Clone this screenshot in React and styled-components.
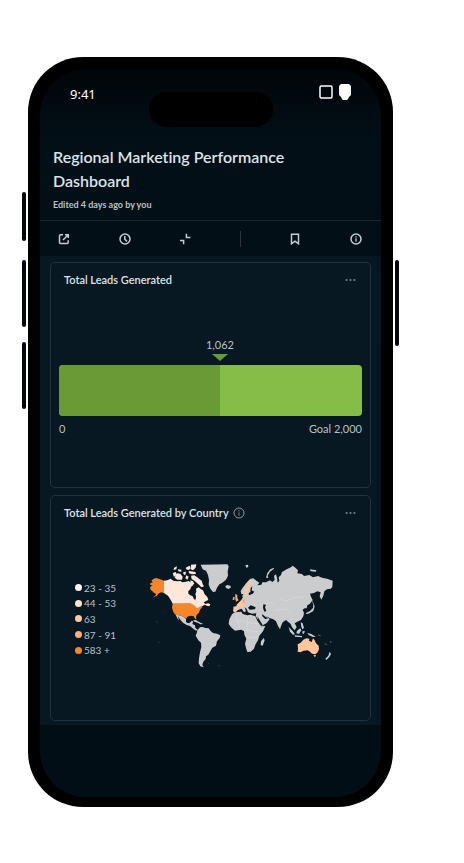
import React from "react";
import styled, { createGlobalStyle } from "styled-components";

const GlobalStyle = createGlobalStyle`
  * { box-sizing: border-box; }
  body { margin: 0; background: #fff; font-family: Lato, "Open Sans", sans-serif; font-variant-ligatures: none; }
  button { font: inherit; color: inherit; background: none; border: 0; padding: 0; cursor: pointer; }
  h1, h2, p, ul { margin: 0; padding: 0; }
  ul { list-style: none; }
  svg { display: block; }
`;

const Page = styled.div`
  padding: 57px 71px 56px 28px;
`;

const Phone = styled.div`
  position: relative;
  padding: 12px 12px 10px;
  background: #000;
  border-radius: 55px;
`;

const SideKey = styled.span`
  position: absolute;
  top: ${(p) => p.$top}px;
  ${(p) => p.$side}: -6px;
  width: 4px;
  height: ${(p) => p.$length}px;
  border-radius: 2px;
  background: #03060c;
`;

const Screen = styled.div`
  display: flex;
  flex-direction: column;
  border-radius: 46px;
  overflow: hidden;
  padding-bottom: 72px;
  background: linear-gradient(#010508, #020f17 70px, #020e16);
  color: #dde3e7;
`;

const StatusBar = styled.div`
  display: grid;
  grid-template-columns: 1fr 124px 1fr;
  align-items: start;
  height: 76px;
  padding: 15px 30px 0;
`;

const Time = styled.time`
  font: 400 13px/20px "Noto Sans", sans-serif;
  color: #fff;
`;

const Island = styled.div`
  height: 35px;
  margin-top: 8px;
  border-radius: 18px;
  background: #000;
`;

const StatusIcons = styled.div`
  display: flex;
  justify-content: flex-end;
  gap: 6px;
`;

const Header = styled.header`
  padding: 0 13px 8px;
`;

const Title = styled.h1`
  padding-right: 60px;
  font-size: 16px;
  line-height: 24px;
  font-weight: 600;
`;

const Edited = styled.p`
  margin-top: 5px;
  font-size: 9px;
  line-height: 14px;
  font-weight: 700;
  color: #b9c3c9;
`;

const Toolbar = styled.nav`
  display: flex;
  align-items: center;
  justify-content: space-between;
  height: 36px;
  padding: 0 19px 0 18px;
  border-top: 1px solid #17252d;
  color: #c3cbd0;
`;

const Separator = styled.span`
  width: 1px;
  height: 16px;
  background: #2a363d;
`;

const IconButton = styled.button`
  display: flex;
`;

const Dashboard = styled.main`
  display: flex;
  flex-direction: column;
  gap: 7px;
  padding: 6px 10px 4px;
  background: #071822;
`;

const Card = styled.section`
  min-height: 226px;
  padding: 0 8px;
  border: 1px solid #20323b;
  border-radius: 5px;
`;

const CardHeader = styled.div`
  display: flex;
  align-items: center;
  gap: 4px;
  height: 34px;
  padding: 0 6px 0 5px;
`;

const CardTitle = styled.h2`
  font-size: 11px;
  line-height: 16px;
  font-weight: 600;
`;

const MoreButton = styled(IconButton)`
  margin-left: auto;
  color: #75828a;
`;

const InfoButton = styled(IconButton)`
  color: #8d989f;
`;

const Goal = styled.div`
  padding-top: 40px;
  font-size: 11px;
  line-height: 16px;
  color: #b7c1c8;
`;

const Marker = styled.div`
  display: flex;
  flex-direction: column;
  align-items: center;
  gap: 1px;
  width: 0;
`;

const Pointer = styled.span`
  border: 8px solid transparent;
  border-top: 7px solid #699a36;
  border-bottom: 0;
`;

const Track = styled.div`
  height: 51px;
  margin: 4px 0 5px;
  border-radius: 4px;
  overflow: hidden;
  background: #85bd48;
`;

const Fill = styled.div`
  height: 100%;
  background: #699a36;
`;

const Scale = styled.div`
  display: flex;
  justify-content: space-between;
`;

const MapBody = styled.div`
  display: flex;
  align-items: center;
  padding: 25px 26px 0 16px;
`;

const Legend = styled.ul`
  display: grid;
  flex: 0 0 65px;
  height: 78px;
`;

const LegendItem = styled.li`
  display: flex;
  align-items: center;
  gap: 2px;
  font-size: 10px;
  line-height: 14px;
  white-space: nowrap;
  color: #b7c1c8;
`;

const Dot = styled.span`
  width: 7px;
  height: 7px;
  border-radius: 50%;
  background: ${(p) => p.$color};
`;

const MapArt = styled.svg`
  flex: 1;
  min-width: 0;
  height: 128px;
`;

const Icon = ({ size = 12, children }) => (
  <svg width={size} height={size} viewBox="0 0 12 12" fill="none" stroke="currentColor" strokeWidth="1.5" aria-hidden="true">
    {children}
  </svg>
);

const InfoShape = ({ weight = 1.5 }) => (
  <>
    <circle cx="6" cy="6" r="5" strokeWidth={weight} />
    <path d="M6 5.3v3.4M6 3.2v1.2" strokeWidth={weight * 0.85} />
  </>
);

const More = () => (
  <MoreButton type="button" aria-label="More options">
    <svg width="11" height="8" viewBox="0 0 11 8" fill="currentColor" aria-hidden="true">
      <circle cx="1.6" cy="4" r="1.1" />
      <circle cx="5.5" cy="4" r="1.1" />
      <circle cx="9.4" cy="4" r="1.1" />
    </svg>
  </MoreButton>
);

const WorldMap = () => (
  <MapArt viewBox="0 0 588 384" role="img" aria-label="World map of leads by country">
    <g fill="#cbcccd">
      <path d="M182 29 262 28 266 34 263 50 264 62 258 74 246 84 238 88 231 98 226 110 219 111 211 101 206 89 207 75 204 60 198 47 188 43Z" />
      <path d="M256 93 262 90 271 92 273 97 266 102 258 99Z" />
      <path d="M106 177 116 181 124 182 132 186 138 193 138 201 144 205 150 203 154 198 160 199 157 207 165 211 166 219 173 224 168 227 158 220 150 213 140 210 130 204 122 196 114 184 117 197 112 190Z" />
      <path d="M159 196 167 195 176 200 183 204 190 207 181 208 173 203 164 200Z" />
      <path d="M172 226 180 217 188 216 196 219 206 220 212 228 219 234 231 236 241 241 239 249 231 259 228 272 217 278 210 290 205 299 198 304 197 312 190 320 187 329 191 337 181 334 176 325 177 310 180 292 184 276 183 263 175 256 167 242 170 235Z" />
    </g>
    <g fill="#ffe8da">
      <path d="M72 77 82 76 92 71 100 77 111 79 121 78 127 82 138 80 146 78 151 82 158 84 160 90 153 96 151 103 145 108 145 116 151 121 158 124 162 133 167 134 168 124 166 117 169 110 168 101 176 97 183 103 189 106 194 118 202 126 205 135 198 138 191 142 196 147 204 145 211 148 208 154 200 152 195 149 186 154 178 160 168 161 160 152 152 146 98 146 94 138 88 128 84 122 72 114Z" />
      <path d="M98 55 107 50 109 59 102 66ZM110 55 121 56 128 65 126 74 112 74 104 68ZM102 38 111 34 109 43 101 45ZM114 43 124 44 124 50 115 49ZM130 51 138 50 136 61 130 57ZM139 37 150 32 151 42 145 45 137 42ZM153 29 169 28 167 38 159 46 152 43ZM146 48 154 49 166 51 168 57 156 58 147 55ZM139 61 146 65 142 74 136 70ZM153 62 163 61 172 67 179 73 185 77 188 87 192 94 184 97 177 89 170 83 163 77 155 72ZM151 76 159 79 163 86 157 90 151 85Z" />
    </g>
    <g fill="#f5862b">
      <path d="M72 77 59 72 48 69 40 72 34 77 39 82 31 84 31 90 38 91 30 97 32 105 37 108 42 114 48 116 47 121 39 127 50 123 57 115 64 112 72 114Z" />
      <path d="M98 146 152 145 160 150 168 155 170 160 180 155 186 151 187 157 180 164 177 173 170 180 168 187 169 194 164 190 161 184 151 182 142 185 138 192 132 186 124 183 114 181 104 177 99 169 96 158Z" />
    </g>
    <g transform="translate(270 0)">
      <g fill="#cbcccd">
        <path d="M12 158 20 153 25 146 34 136 39 127 36 123 41 118 34 117 32 108 38 98 49 84 60 72 70 70 79 77 88 83 82 91 94 89 97 82 108 82 120 76 127 81 134 75 132 62 138 58 141 68 143 83 148 77 146 67 153 60 156 51 170 43 183 37 188 32 196 38 204 46 202 55 216 57 222 63 238 60 249 67 264 63 276 68 291 71 308 77 307 96 302 101 291 103 283 109 280 122 274 134 269 124 272 112 262 109 252 114 240 116 243 125 248 135 240 146 232 151 230 160 224 160 218 164 222 174 220 184 213 195 202 200 194 205 200 216 194 226 186 217 182 207 174 200 168 195 158 202 153 213 150 223 144 213 138 199 130 193 118 189 108 183 119 193 110 204 96 212 90 206 84 194 77 183 79 175 66 176 54 172 50 162 44 157 48 169 42 172 35 161 24 165 16 172 9 169Z" />
        <path d="M6 178 14 172 34 170 38 177 52 181 62 179 76 184 82 197 90 209 94 214 106 213 99 229 88 242 84 256 76 269 72 281 62 290 52 291 48 279 45 266 49 251 43 239 42 229 34 224 15 227 3 217-4 207-2 193Z" />
        <path d="M101 249 104 256 98 272 92 270 93 259ZM108 68 112 54 121 43 132 38 131 42 120 50 113 62 115 69ZM46 31 54 29 55 36 49 38ZM240 43 259 46 258 50 242 49ZM243 128 247 140 250 149 249 159 239 169 229 173 228 177 235 176 250 168 254 154 249 142ZM212 202 218 205 222 219 217 223 214 215ZM176 216 188 228 195 238 189 239 180 230ZM194 241 216 243 216 247 195 245ZM201 227 211 220 214 226 207 237 199 235ZM218 228 225 229 221 237 217 235ZM232 234 244 237 257 245 249 246 236 240ZM299 290 303 297 298 306 289 315 286 311 295 302Z" />
      </g>
      <path d="M151 132Q168 142 180 133T220 127M92 151Q112 141 131 145M135 166 164 162 182 171M9 200 37 197 66 204 87 207M19 184 29 218M53 183 51 226 86 231M51 248 82 247" fill="none" stroke="#e0e0e0" strokeWidth="1.5" />
      <path d="M54 158 62 151 77 157 75 163 59 164ZM100 148 108 149 105 157 109 168 103 170 99 159ZM61 111 62 99 67 94 65 106 73 110 68 116 57 121 56 114ZM82 184 91 199 98 210 94 211 85 199ZM96 177 107 186 115 189 106 193 97 184Z" fill="#071822" />
      <g fill="#ffc59b">
        <path d="M41 115 46 103 52 90 60 83 63 87 57 97 56 106 52 118 46 124ZM34 117 42 104 51 85 61 75 66 79 52 88 44 103 40 115ZM24 145 32 137 38 130 46 132 47 144 41 146 43 156 36 158 29 153 24 158 19 151ZM10 155 20 154 25 159 19 170 11 170Z" />
        <path d="M203 268 212 263 220 254 229 250 238 251 237 257 245 261 249 250 254 256 258 265 266 272 267 283 263 292 256 298 246 296 240 290 233 286 221 287 211 292 203 290 204 281ZM250 301 258 300 255 307Z" />
      </g>
      <path d="M16 116 22 120 22 129 26 136 18 140 16 132ZM9 127 14 125 13 135 8 135ZM36 134 44 132 46 144 38 144Z" fill="#f9ae75" />
      <path d="M284 266 291 269M300 258 304 264M264 240 272 242" stroke="#56646b" strokeWidth="3" />
    </g>
    <path d="M203 328 207 325M234 333 239 332M48 200 52 202M55 261 59 263" stroke="#34454d" strokeWidth="3" />
  </MapArt>
);

const legend = [
  { label: "23 - 35", color: "#fff8f3" },
  { label: "44 - 53", color: "#ffe2cd" },
  { label: "63", color: "#ffc89f" },
  { label: "87 - 91", color: "#ffad70" },
  { label: "583 +", color: "#f5862b" },
];

const leads = 1062;
const goal = 2000;
const progress = `${(leads / goal) * 100}%`;

export default function App() {
  return (
    <Page>
      <GlobalStyle />
      <Phone>
        <SideKey $side="left" $top={135} $length={49} />
        <SideKey $side="left" $top={203} $length={67} />
        <SideKey $side="left" $top={285} $length={67} />
        <SideKey $side="right" $top={203} $length={86} />
        <Screen>
          <StatusBar>
            <Time>9:41</Time>
            <Island />
            <StatusIcons>
              <svg width="14" height="16" viewBox="0 0 14 16" fill="none" stroke="#fff" strokeWidth="1.5" aria-hidden="true">
                <rect x="1" y="2" width="12" height="12" rx="1.5" />
              </svg>
              <svg width="12" height="16" viewBox="0 0 12 16" fill="#fff" aria-hidden="true">
                <path d="M2 0h8l2 2v9l-2 2-1 2-1 1H4l-1-1-1-2-2-2V2Z" />
              </svg>
            </StatusIcons>
          </StatusBar>
          <Header>
            <Title>Regional Marketing Performance Dashboard</Title>
            <Edited>Edited 4 days ago by you</Edited>
          </Header>
          <Toolbar aria-label="Dashboard actions">
            <IconButton type="button" aria-label="Open">
              <Icon>
                <path d="M5 1.8H2.5q-1 0-1 1v6.7q0 1 1 1h6.7q1 0 1-1V7.3M5 7l5-5M7 1.7h3.3V5" />
              </Icon>
            </IconButton>
            <IconButton type="button" aria-label="History">
              <Icon>
                <circle cx="6" cy="6" r="5" />
                <path d="M5.8 3v3.2L8 8.4" />
              </Icon>
            </IconButton>
            <IconButton type="button" aria-label="Collapse">
              <Icon>
                <path d="M7.4.7v3.7h4M1 7.6h3.6v3.7" />
              </Icon>
            </IconButton>
            <Separator />
            <IconButton type="button" aria-label="Bookmark">
              <Icon>
                <path d="M2.5 1.2h7v9.6L6 8.2l-3.5 2.6Z" />
              </Icon>
            </IconButton>
            <IconButton type="button" aria-label="Details">
              <Icon>
                <InfoShape />
              </Icon>
            </IconButton>
          </Toolbar>
          <Dashboard>
            <Card>
              <CardHeader>
                <CardTitle>Total Leads Generated</CardTitle>
                <More />
              </CardHeader>
              <Goal>
                <Marker style={{ marginLeft: progress }}>
                  <span>{leads.toLocaleString("en-US")}</span>
                  <Pointer />
                </Marker>
                <Track role="meter" aria-label="Total leads" aria-valuemin={0} aria-valuemax={goal} aria-valuenow={leads}>
                  <Fill style={{ width: progress }} />
                </Track>
                <Scale>
                  <span>0</span>
                  <span>Goal {goal.toLocaleString("en-US")}</span>
                </Scale>
              </Goal>
            </Card>
            <Card>
              <CardHeader>
                <CardTitle>Total Leads Generated by Country</CardTitle>
                <InfoButton type="button" aria-label="About this chart">
                  <Icon>
                    <InfoShape weight={1} />
                  </Icon>
                </InfoButton>
                <More />
              </CardHeader>
              <MapBody>
                <Legend>
                  {legend.map((item) => (
                    <LegendItem key={item.label}>
                      <Dot $color={item.color} />
                      {item.label}
                    </LegendItem>
                  ))}
                </Legend>
                <WorldMap />
              </MapBody>
            </Card>
          </Dashboard>
        </Screen>
      </Phone>
    </Page>
  );
}
